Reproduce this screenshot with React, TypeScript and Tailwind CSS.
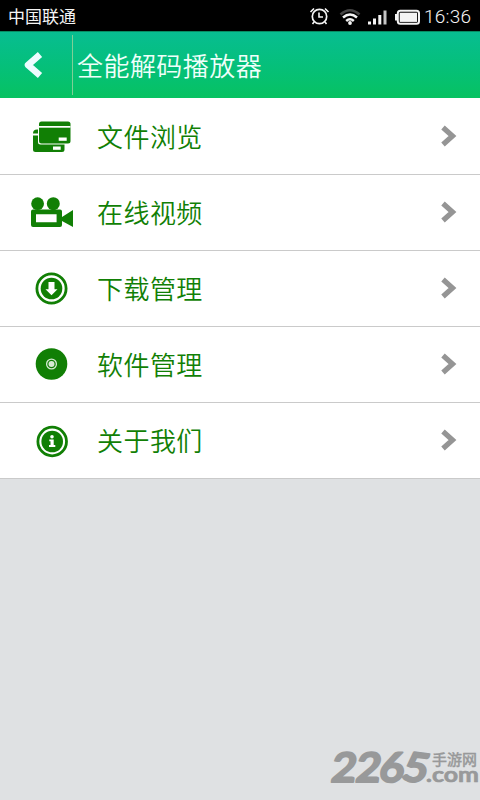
import React from "react";

const CardsIcon = () => (
    <svg width="44" height="44" viewBox="0 0 44 44" fill="#117f05">
        <path d="M3 19.5Q3 15.5 7 15.5H8V19.5Z" />
        <path d="M3 21.5H8V28Q8 30.5 10.5 30.5H34.5V35.5Q34.5 38 32 38H5.500Q3 38 3 35.500Z" />
        <rect x="9" y="7.500" width="31.500" height="22" rx="2.500" />
        <rect x="9" y="12" width="31.500" height="1.700" fill="#fff" />
        <rect x="28.700" y="23.500" width="8" height="3.300" fill="#fff" />
        <rect x="23" y="32.500" width="7.700" height="3.300" fill="#fff" />
    </svg>
);

const CameraIcon = () => (
    <svg width="44" height="44" viewBox="0 0 44 44" fill="#117f05">
        <circle cx="7.600" cy="13.700" r="6.400" />
        <circle cx="23.300" cy="13.700" r="6.500" />
        <path fillRule="evenodd" d="M3 19.500H30Q32 19.500 32 21.500V27L43 20V37L32 31V35Q32 37 30 37H3Q1 37 1 35V21.500Q1 19.500 3 19.500ZM6 24.300V32.200H26.600V24.300Z" />
    </svg>
);

const DownloadIcon = () => (
    <svg width="44" height="44" viewBox="0 0 44 44" fill="#117f05">
        <circle cx="21.500" cy="22.500" r="14.600" fill="none" stroke="#117f05" strokeWidth="2.800" />
        <circle cx="21.500" cy="22.500" r="10.800" />
        <path d="M18.500 16H24.500V23.300H27.500L21.500 29.300L15.500 23.300H18.500Z" fill="#fff" />
    </svg>
);

const DiscIcon = () => (
    <svg width="44" height="44" viewBox="0 0 44 44" fill="#117f05">
        <circle cx="21.500" cy="22" r="15.800" />
        <circle cx="21.500" cy="22" r="4.900" fill="none" stroke="#d6ead3" strokeWidth="1.300" />
        <circle cx="21.500" cy="22" r="3" fill="#d6ead3" />
    </svg>
);

const InfoIcon = () => (
    <svg width="44" height="44" viewBox="0 0 44 44" fill="#117f05">
        <circle cx="22.200" cy="23.500" r="14.300" fill="none" stroke="#117f05" strokeWidth="2.800" />
        <circle cx="22.200" cy="23.500" r="10.800" />
        <g fill="#fff">
            <circle cx="22" cy="18.800" r="1.800" />
            <path d="M19.300 21.500H23.700V27H25.300V29H19V27H20.500V23.300H19.300Z" />
        </g>
    </svg>
);

const items = [
    {label: "文件浏览", icon: <CardsIcon />},
    {label: "在线视频", icon: <CameraIcon />},
    {label: "下载管理", icon: <DownloadIcon />},
    {label: "软件管理", icon: <DiscIcon />},
    {label: "关于我们", icon: <InfoIcon />},
];

const StatusIcons = () => (
    <svg width="112" height="24" viewBox="0 0 112 24" fill="none" stroke="#f4f4f4">
        {/* alarm */}
        <circle cx="11.500" cy="12.500" r="7.200" strokeWidth="1.700" />
        <path d="M11 8.500V13H15M2.500 8L6 4.500M17 4.500L20.500 8M6 18L4.500 20M17 18L18.500 20" strokeWidth="1.600" />
        {/* wifi */}
        <path d="M32.500 10.500Q42 2 51.500 10.500" stroke="#444" strokeWidth="2.600" />
        <path d="M35 13.500Q42 7.500 49 13.500M38.200 17Q42 13.500 45.800 17" strokeWidth="2.500" />
        <circle cx="42" cy="19" r="1.900" fill="#f4f4f4" stroke="none" />
        {/* signal */}
        <g fill="#f4f4f4" stroke="none">
            <rect x="60" y="17.500" width="3" height="3" />
            <rect x="65" y="14.500" width="3" height="6" />
            <rect x="70.300" y="11" width="3" height="9.500" />
            <rect x="75.500" y="6.500" width="3" height="14" fill="#c4c4c4" />
        </g>
        {/* battery */}
        <rect x="89.800" y="6.800" width="21.200" height="13" rx="2.500" strokeWidth="2" />
        <rect x="91.700" y="8.700" width="17.400" height="9.200" fill="#f4f4f4" stroke="none" />
        <path d="M88 10V16.500" strokeWidth="2" />
    </svg>
);

const Watermark = () => (
    <svg
        className="absolute right-0 bottom-0"
        width="156"
        height="76"
        viewBox="-4 -20 156 76"
        fill="#98999a"
        stroke="#98999a"
        strokeLinejoin="round"
        strokeLinecap="round"
    >
        <g fontFamily="Lato, sans-serif" fontWeight="700" fontSize="41" strokeWidth="1.800">
            <text transform="translate(2 37.500) scale(1.060 1) skewX(-7)">2</text>
            <text transform="translate(26.500 37.500) scale(1.060 1) skewX(-7)">2</text>
            <text transform="translate(50 37.500) scale(1.060 1) skewX(-7)">6</text>
            <text transform="translate(72 36) rotate(8) scale(1.060 1) skewX(-7)">5</text>
        </g>
        <text x="104" y="21" fontFamily="Noto Sans CJK SC, sans-serif" fontWeight="500" fontSize="15" strokeWidth="0.300">手游网</text>
        <text x="98" y="37.500" fontFamily="Lato, sans-serif" fontWeight="700" fontSize="20" strokeWidth="0.600" textLength="53" lengthAdjust="spacingAndGlyphs">.com</text>
    </svg>
);

export default function App() {
    return (
        <div className="relative flex h-[800px] w-[480px] flex-col overflow-hidden bg-[#dfe1e3] font-['Liberation_Sans','Noto_Sans_CJK_SC',sans-serif]">
            <div className="flex h-[31px] items-center bg-black pr-[9px] pl-[8px] text-[#f4f4f4]">
                <span className="pt-[4px] text-[17px] leading-[28px]">中国联通</span>
                <div className="ml-auto flex items-center gap-[4px]">
                    <StatusIcons />
                    <span className="w-[47px] pt-[2px] font-[Roboto] text-[19px] leading-[24px] font-light tracking-[0.200px] whitespace-nowrap">16:36</span>
                </div>
            </div>
            <header className="flex h-[67px] items-center border-t border-[#078b62] bg-linear-to-b from-[#08bd91] to-[#07c261]">
                <button className="flex h-full w-[72px] items-center pl-[21px]">
                    <svg width="24" height="28" viewBox="0 0 24 28" fill="none" stroke="#edfcff" strokeWidth="6.500" strokeLinejoin="round">
                        <path d="M19 3.500L7 14L19 24.500" />
                    </svg>
                </button>
                <div className="h-[60px] w-px bg-[#7fcf96]" />
                <h1 className="pl-[4px] font-['Noto_Sans_CJK_SC',sans-serif] text-[26px] leading-[40px] font-[350] tracking-[0.450px] text-[#effffa]">全能解码播放器</h1>
            </header>
            <ul className="bg-white pt-px">
                {items.map((item) => (
                    <li key={item.label} className="flex h-[76px] items-center border-b border-[#cacaca] pb-[2px] pl-[30px]">
                        {item.icon}
                        <span className="pt-px pl-[23px] font-['Noto_Sans_CJK_SC',sans-serif] text-[26px] leading-[40px] font-[350] tracking-[0.450px] text-[#117f05]">{item.label}</span>
                        <svg className="mr-[22px] ml-auto" width="20" height="24" viewBox="0 0 20 24" fill="none" stroke="#959595" strokeWidth="5.200">
                            <path d="M5 3.500L14.500 12L5 20.500" />
                        </svg>
                    </li>
                ))}
            </ul>
            <Watermark />
        </div>
    );
}
